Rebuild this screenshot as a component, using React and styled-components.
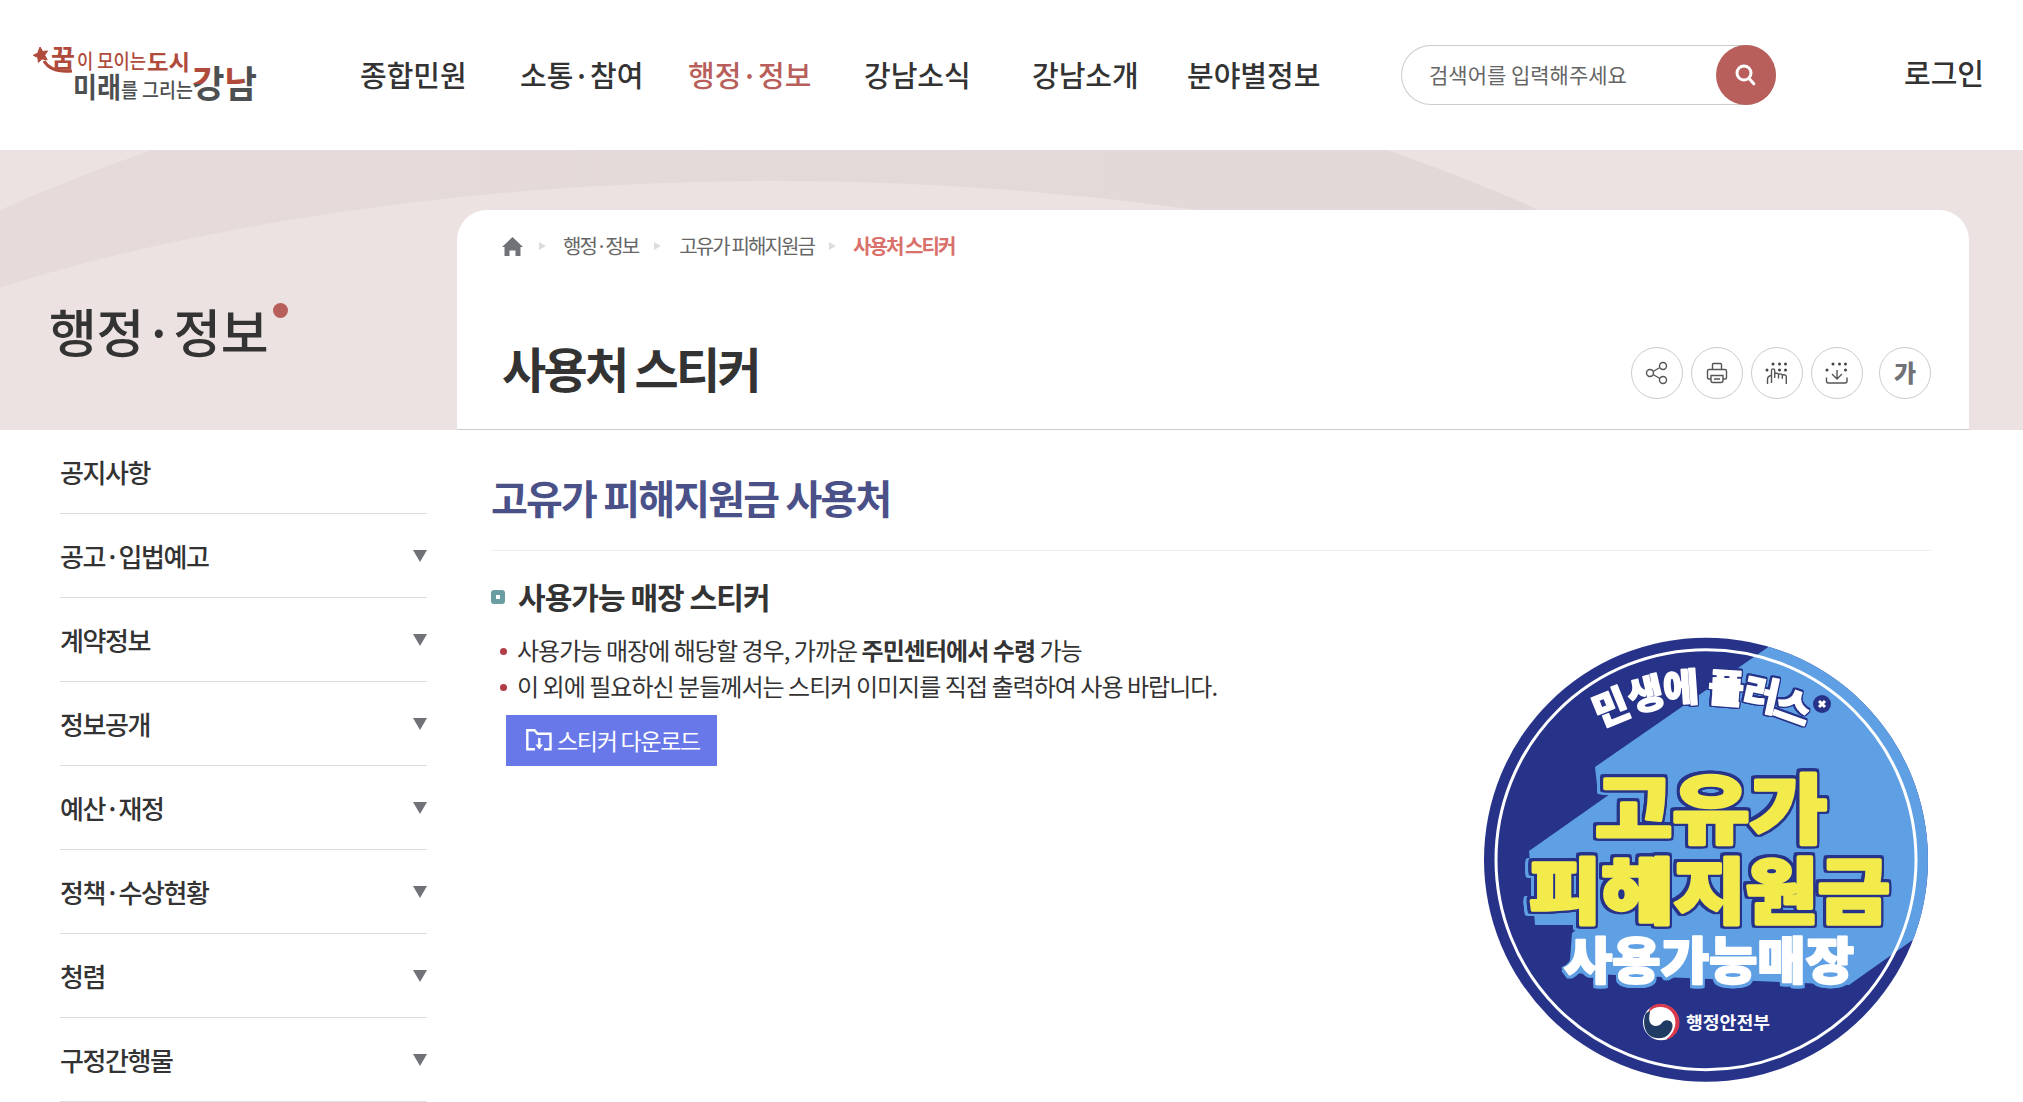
import React from 'react'
import styled, { createGlobalStyle } from 'styled-components'

const NAV = [
    { name: '종합민원', width: 160 },
    { name: '소통·참여', width: 168 },
    { name: '행정·정보', width: 176 },
    { name: '강남소식', width: 168 },
    { name: '강남소개', width: 155 },
    { name: '분야별정보', width: 133 },
]

const MENU = ['공지사항', '공고·입법예고', '계약정보', '정보공개', '예산·재정', '정책·수상현황', '청렴', '구정간행물']

const SLOGAN = [
    { char: '민', x: 141, y: 89, turn: -22 },
    { char: '생', x: 176, y: 76, turn: -13 },
    { char: '에', x: 211, y: 69.5, turn: -4 },
    { char: '플', x: 256, y: 70, turn: 4 },
    { char: '러', x: 291, y: 76.5, turn: 12 },
    { char: '스', x: 323, y: 89, turn: 20 },
]

function Logo() {
    return (
        <LogoSvg viewBox="0 -10 230 84">
            <pattern id="twotone" width="230" height="84" patternUnits="userSpaceOnUse">
                <rect width="230" height="84" fill="#4d4f51" />
                <rect x="160" y="20" width="21" height="24" fill="#b04b3c" />
                <rect x="194" y="20" width="19.500" height="24" fill="#b04b3c" />
            </pattern>
            <path d="M9 7l2.6 4.4 5-.4-2.9 4.2 2.5 4.7-5.2-1-3.6 3.5-.6-5L2.300 15.300l4.500-2.200z" fill="#b04b3c" stroke="#b04b3c" strokeWidth="1" />
            <path d="M13 21Q20 33 41 31" fill="none" stroke="#b04b3c" strokeWidth="3" />
            <g fill="#b04b3c">
                <text x="20" y="27" fontSize="25" fontWeight="700" textLength="24" lengthAdjust="spacingAndGlyphs">꿈</text>
                <text x="46" y="29" fontSize="20" fontWeight="500" textLength="69" lengthAdjust="spacingAndGlyphs">이 모이는</text>
                <text x="116" y="30" fontSize="22" fontWeight="700" textLength="43" lengthAdjust="spacingAndGlyphs">도시</text>
            </g>
            <g fill="#4d4f51">
                <text x="42" y="58" fontSize="28" fontWeight="700" textLength="48" lengthAdjust="spacingAndGlyphs">미래</text>
                <text x="90" y="57.500" fontSize="20" fontWeight="500" textLength="72" lengthAdjust="spacingAndGlyphs">를 그리는</text>
            </g>
            <text x="161" y="58" fontSize="37" fontWeight="700" fill="url(#twotone)" textLength="65" lengthAdjust="spacingAndGlyphs">강남</text>
        </LogoSvg>
    )
}

function Sticker() {
    return (
        <StickerSvg viewBox="13 18 446 446">
            <clipPath id="disc"><circle cx="236" cy="240.700" r="222" /></clipPath>
            <circle cx="236" cy="240.700" r="222" fill="#263389" />
            <path clipPath="url(#disc)" d="M307 22L125 148l3 27h12L59 232l6 74h48l-11 8-3 40 280 12 65-46h20V22z" fill="#5f9fe3" />
            <circle cx="236" cy="240.700" r="210" fill="none" stroke="#fff" strokeWidth="3" />
            <Slogan>
                {SLOGAN.map((s) => (
                    <text key={s.char} y="13.500" transform={`translate(${s.x} ${s.y}) rotate(${s.turn})`}>{s.char}</text>
                ))}
            </Slogan>
            <circle cx="352" cy="85" r="9" fill="#263389" />
            <path d="M349 82l6 6m0-6l-6 6" stroke="#fff" strokeWidth="3" />
            <Headline>
                <text x="125" y="217.500" fontSize="75" textLength="232" lengthAdjust="spacingAndGlyphs">고유가</text>
                <text x="59" y="297.500" fontSize="71" textLength="361" lengthAdjust="spacingAndGlyphs">피해지원금</text>
            </Headline>
            <SubHeadline>
                <text x="94" y="360" fontSize="50" textLength="290" lengthAdjust="spacingAndGlyphs">사용가능매장</text>
            </SubHeadline>
            <circle cx="191" cy="403.300" r="18" fill="#fff" />
            <path d="M179 393C183 386 197 385 203 394C209 403 205 414 197 420C210 416 212 401 205 392C197 383 181 383 179 393z" fill="#d8394a" stroke="#d8394a" />
            <path d="M176 394C173 400 173 410 179 416C185 421 195 420 199 415C203 411 204 404 200 402C196 400 193 402 191 405C188 408 181 408 179.500 402C178.500 398 180 395 180 392z" fill="#1f3b63" />
            <text x="216" y="410" fontSize="17.500" fontWeight="700" fill="#fff" textLength="84" lengthAdjust="spacingAndGlyphs">행정안전부</text>
        </StickerSvg>
    )
}

function ShareIcon() {
    return (
        <Icon viewBox="0 0 24 24">
            <circle cx="5" cy="12" r="3.500" /><circle cx="18" cy="5" r="3.500" /><circle cx="18" cy="19" r="3.500" />
            <path d="M8 10.500L15 6.500M8 13.500l7 4" />
        </Icon>
    )
}

function PrintIcon() {
    return (
        <Icon viewBox="0 0 24 24">
            <path d="M7.500 8.500V3.500a1 1 0 0 1 1-1h7a1 1 0 0 1 1 1v5M6 18H4a1.500 1.500 0 0 1-1.500-1.500V10A1.500 1.500 0 0 1 4 8.500h16a1.500 1.500 0 0 1 1.500 1.500v6.500A1.500 1.500 0 0 1 20 18h-2M6 14.500h12v5a2 2 0 0 1-2 2H8a2 2 0 0 1-2-2zM9 18h6" />
        </Icon>
    )
}

function Dots({ points }) {
    return points.map(([x, y]) => <circle key={x + '-' + y} cx={x} cy={y} r="1.500" fill="#444" stroke="none" />)
}

function BrailleIcon() {
    return (
        <Icon viewBox="0 0 24 24">
            <Dots points={[[8, 3], [14.500, 3], [20.500, 3], [2, 9], [14.500, 9], [20.500, 9]]} />
            <path d="M6.500 17V9.500a1.600 1.600 0 0 1 3.200 0V17M9.700 12.500q3.800-1 3.800 1.500v3.500M13.500 13.200q3.800-1 3.800 1.500v3M17.300 14q4-.8 4 2v7M6.500 14.500q-4 .5-4 4v4.500M6.500 17v5" />
        </Icon>
    )
}

function BrailleDownIcon() {
    return (
        <Icon viewBox="0 0 24 24">
            <Dots points={[[8, 3], [14.500, 3], [20.500, 3], [2, 9], [20.500, 9]]} />
            <path d="M12 9v9m-5-5l5 5 5-5M1.500 16.500V20a2 2 0 0 0 2 2h16.500a2 2 0 0 0 2-2v-3.500" />
        </Icon>
    )
}

function App() {
    return (
        <>
            <GlobalStyle />
            <Header>
                <Logo />
                <Nav>
                    {NAV.map((item) => (
                        <NavItem key={item.name} href="#" $width={item.width} $active={item.name === '행정·정보'}>{item.name}</NavItem>
                    ))}
                </Nav>
                <Search>
                    <SearchText>검색어를 입력해주세요</SearchText>
                    <SearchButton>
                        <svg width="22" height="22" viewBox="0 0 22 22" fill="none" stroke="#fff" strokeWidth="3" strokeLinecap="round">
                            <circle cx="9" cy="9" r="7" /><path d="M14.500 15L18.800 19.800" />
                        </svg>
                    </SearchButton>
                </Search>
                <Login href="#">로그인</Login>
            </Header>
            <Hero>
                <HeroArc viewBox="0 0 2023 280" preserveAspectRatio="none">
                    <linearGradient id="arc" gradientUnits="userSpaceOnUse" x1="0" y1="0" x2="1500" y2="0">
                        <stop offset="0" stopColor="#e6dbda" />
                        <stop offset="1" stopColor="#e2d8d7" />
                    </linearGradient>
                    <circle cx="769.500" cy="1782" r="1886" fill="url(#arc)" />
                    <ellipse cx="775" cy="546" rx="1274" ry="515" fill="#ebe2e1" />
                </HeroArc>
                <HeroTitle>행정·정보<HeroDot /></HeroTitle>
                <TitleCard>
                    <Crumbs>
                        <svg width="21" height="19" viewBox="0 0 21 19" fill="#707278"><path d="M10.500 0L21 10h-2.500v9h-5v-5.500h-6v5.500h-5v-9H0z" /></svg>
                        <CrumbArrow $left={16} $right={17} />
                        <Crumb>행정·정보</Crumb>
                        <CrumbArrow $left={16} $right={18} />
                        <Crumb>고유가 피해지원금</Crumb>
                        <CrumbArrow $left={15} $right={17} />
                        <Crumb $current>사용처 스티커</Crumb>
                    </Crumbs>
                    <TitleRow>
                        <PageTitle>사용처 스티커</PageTitle>
                        <Tools>
                            <Tool><ShareIcon /></Tool>
                            <Tool><PrintIcon /></Tool>
                            <Tool><BrailleIcon /></Tool>
                            <Tool><BrailleDownIcon /></Tool>
                            <Tool $apart>가</Tool>
                        </Tools>
                    </TitleRow>
                </TitleCard>
            </Hero>
            <Body>
                <Side>
                    {MENU.map((name, i) => (
                        <SideItem key={name}>
                            {name}
                            {i > 0 && <SideArrow />}
                        </SideItem>
                    ))}
                </Side>
                <Content>
                    <SectionTitle>고유가 피해지원금 사용처</SectionTitle>
                    <Columns>
                        <div>
                            <SubTitle>사용가능 매장 스티커</SubTitle>
                            <List>
                                <li>사용가능 매장에 해당할 경우, 가까운 <b>주민센터에서 수령</b> 가능</li>
                                <li>이 외에 필요하신 분들께서는 스티커 이미지를 직접 출력하여 사용 바랍니다.</li>
                            </List>
                            <Download>
                                <svg width="26" height="22" viewBox="0 0 26 22" fill="none" stroke="#fff" strokeWidth="2.400">
                                    <path d="M9 20.300H1.300V1.300h7.200l3 3.500h13v15.500H18M13.300 9v9" />
                                    <path d="M9.500 15.500h7.600L13.300 20.500z" fill="#fff" stroke="none" />
                                </svg>
                                스티커 다운로드
                            </Download>
                        </div>
                        <Sticker />
                    </Columns>
                </Content>
            </Body>
        </>
    )
}

export default App

const GlobalStyle = createGlobalStyle`
    * {
        box-sizing: border-box;
    }

    body {
        margin: 0;
        background: #fff;
        color: #333;
        font-family: "Noto Sans CJK KR", sans-serif;
        overflow: hidden;
    }

    a {
        color: inherit;
        text-decoration: none;
    }
`

const Header = styled.header`
    display: flex;
    align-items: center;
    height: 150px;
    padding: 0 39px 0 31px;
`

const LogoSvg = styled.svg`
    width: 230px;
    height: 84px;
    margin-top: -6px;
`

const Nav = styled.nav`
    display: flex;
    width: 960px;
    margin: -3px 0 0 99px;
`

const NavItem = styled.a`
    width: ${(p) => p.$width}px;
    font-size: 29px;
    font-weight: 500;
    white-space: nowrap;
    color: ${(p) => (p.$active ? '#b85f5b' : '#333')};
`

const Search = styled.div`
    display: flex;
    align-items: center;
    justify-content: space-between;
    width: 375px;
    height: 60px;
    margin-left: 81px;
    border-radius: 30px;
    box-shadow: inset 0 0 0 1px #ccc;
`

const SearchText = styled.span`
    margin-top: -2px;
    padding-left: 28px;
    font-size: 21px;
    color: #666;
`

const SearchButton = styled.button`
    display: flex;
    align-items: center;
    justify-content: center;
    width: 60px;
    height: 60px;
    border: 0;
    border-radius: 50%;
    background: #b85f5b;
`

const Login = styled.a`
    margin: -6px 0 0 auto;
    font-size: 29px;
    font-weight: 500;
`

const Hero = styled.section`
    position: relative;
    display: flex;
    height: 280px;
    background: #ebe2e1;
`

const HeroArc = styled.svg`
    position: absolute;
    inset: 0;
    width: 100%;
    height: 280px;
`

const HeroTitle = styled.h2`
    position: relative;
    display: flex;
    width: 457px;
    margin: 0;
    padding: 143px 0 0 49px;
    font-size: 52px;
    font-weight: 500;
    line-height: 76px;
    letter-spacing: -0.4px;
`

const HeroDot = styled.i`
    width: 15px;
    height: 15px;
    margin: 10px 0 0 5px;
    border-radius: 50%;
    background: #b85f5b;
`

const TitleCard = styled.div`
    position: relative;
    width: 1512px;
    height: 220px;
    margin-top: 60px;
    padding: 21px 38px 0 45px;
    border-bottom: 1px solid #ccc;
    border-radius: 30px 30px 0 0;
    background: #fff;
`

const Crumbs = styled.div`
    display: flex;
    align-items: center;
    height: 30px;
`

const Crumb = styled.span`
    font-size: 20px;
    letter-spacing: -1.9px;
    line-height: 30px;
    font-weight: ${(p) => (p.$current ? 700 : 400)};
    color: ${(p) => (p.$current ? '#d9706b' : '#666')};
`

const CrumbArrow = styled.i`
    margin: 0 ${(p) => p.$right}px 0 ${(p) => p.$left}px;
    border-left: 7px solid #ddd;
    border-top: 4px solid transparent;
    border-bottom: 4px solid transparent;
`

const TitleRow = styled.div`
    display: flex;
    align-items: center;
    justify-content: space-between;
    height: 66px;
    margin-top: 73px;
`

const PageTitle = styled.h1`
    margin: 0;
    font-size: 48px;
    font-weight: 700;
    line-height: 66px;
    letter-spacing: -2.7px;
`

const Tools = styled.div`
    display: flex;
    gap: 8px;
    margin-top: 12px;
`

const Tool = styled.button`
    display: flex;
    align-items: center;
    justify-content: center;
    width: 52px;
    height: 52px;
    margin-left: ${(p) => (p.$apart ? 8 : 0)}px;
    padding: 0 0 ${(p) => (p.$apart ? 4 : 0)}px;
    border: 1px solid #ccc;
    border-radius: 50%;
    background: #fff;
    color: #707278;
    font-family: inherit;
    font-size: 24px;
    font-weight: 900;
`

const Icon = styled.svg`
    width: 24px;
    height: 24px;
    fill: none;
    stroke: #555;
    stroke-width: 1.4;
`

const Body = styled.main`
    display: flex;
`

const Side = styled.ul`
    width: 367px;
    margin: 0 64px 0 60px;
    padding: 0;
    list-style: none;
`

const SideItem = styled.li`
    display: flex;
    align-items: center;
    justify-content: space-between;
    height: 84px;
    padding-bottom: 1px;
    border-bottom: 1px solid #ddd;
    font-size: 26px;
    font-weight: 500;
    letter-spacing: -1.4px;
`

const SideArrow = styled.i`
    margin-top: 1px;
    border-top: 12px solid #707278;
    border-left: 7.5px solid transparent;
    border-right: 7.5px solid transparent;
`

const Content = styled.section`
    width: 1440px;
`

const SectionTitle = styled.h3`
    height: 121px;
    margin: 0;
    padding-top: 37px;
    border-bottom: 1px solid #eee;
    font-size: 40px;
    font-weight: 700;
    line-height: 60px;
    letter-spacing: -1.8px;
    color: #4a5188;
`

const Columns = styled.div`
    display: flex;
    justify-content: space-between;
`

const SubTitle = styled.h4`
    display: flex;
    align-items: center;
    height: 44px;
    margin: 23px 0 0;
    font-size: 30px;
    font-weight: 700;
    letter-spacing: -0.95px;

    &::before {
        content: '';
        box-sizing: border-box;
        width: 14px;
        height: 14px;
        margin: 1px 13px 0 0;
        border: 5px solid #6b9ea3;
        border-radius: 3px;
    }
`

const List = styled.ul`
    margin: 14px 0 0;
    padding: 0;
    list-style: none;
    font-size: 24px;
    line-height: 36px;
    letter-spacing: -0.96px;

    li {
        display: flex;
        align-items: center;
        white-space: pre;
    }

    li::before {
        content: '';
        width: 7px;
        height: 7px;
        margin: 3px 10px 0 9px;
        border-radius: 50%;
        background: #b23c48;
    }
`

const Download = styled.button`
    display: flex;
    align-items: center;
    gap: 5px;
    width: 211px;
    height: 51px;
    margin: 11px 0 0 15px;
    padding: 0 0 2px 20px;
    border: 0;
    background: #6878e8;
    color: #fff;
    font-family: inherit;
    font-size: 23px;
    letter-spacing: -1.3px;
    white-space: nowrap;
`

const StickerSvg = styled.svg`
    width: 446px;
    height: 446px;
    margin: 86px 2px 0 0;
`

const Slogan = styled.g`
    fill: #fff;
    stroke: #fff;
    stroke-width: 1.4px;
    stroke-linejoin: round;
    text-anchor: middle;
    font-size: 39px;
    font-weight: 900;
    filter: drop-shadow(1.6px 0 #263389) drop-shadow(-1.6px 0 #263389) drop-shadow(0 1.6px #263389) drop-shadow(0 -1.6px #263389);
`

const Headline = styled.g`
    fill: #f3eb4c;
    stroke: #f3eb4c;
    stroke-width: 3.5px;
    stroke-linejoin: round;
    font-weight: 900;
    filter: drop-shadow(2.6px 0 #263389) drop-shadow(-2.6px 0 #263389) drop-shadow(0 2.6px #263389) drop-shadow(0 -2.6px #263389)
        drop-shadow(2.6px 0 #5f9fe3) drop-shadow(-2.6px 0 #5f9fe3) drop-shadow(0 2.6px #5f9fe3);
`

const SubHeadline = styled.g`
    fill: #fff;
    stroke: #fff;
    stroke-width: 2px;
    stroke-linejoin: round;
    font-weight: 900;
    filter: drop-shadow(2px 0 #5f9fe3) drop-shadow(-2px 0 #5f9fe3) drop-shadow(0 3px #5f9fe3);
`
